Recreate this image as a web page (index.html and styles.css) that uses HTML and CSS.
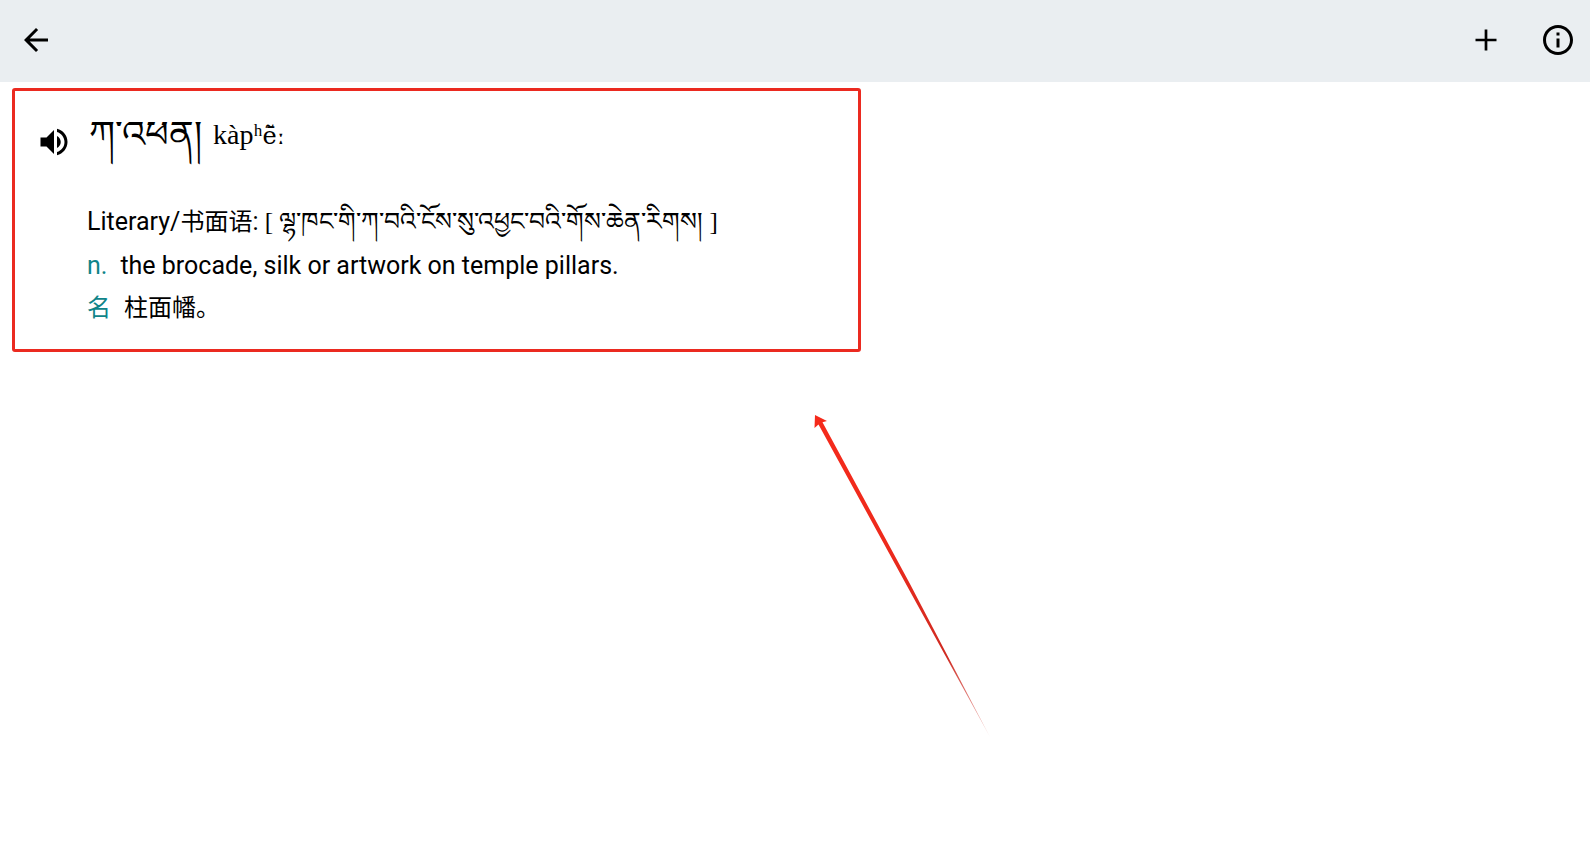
FILE: index.html
```html
<!DOCTYPE html>
<html lang="en">
<head>
<meta charset="utf-8">
<title>Dictionary entry</title>
<link rel="stylesheet" href="styles.css">
</head>
<body>
<header class="appbar">
  <button class="icon-button" type="button" aria-label="Back">
    <svg class="icon" viewBox="0 0 24 24"><path d="M20 11H7.83l5.59-5.59L12 4l-8 8 8 8 1.41-1.41L7.83 13H20v-2z"/></svg>
  </button>
  <div class="actions">
    <button class="icon-button" type="button" aria-label="Add">
      <svg class="icon" viewBox="0 0 24 24"><path d="M19 12.900h-6.100V19h-1.800v-6.100H5v-1.800h6.100V5h1.800v6.100H19z"/></svg>
    </button>
    <button class="icon-button" type="button" aria-label="Information">
      <svg class="icon" viewBox="0 0 24 24"><path d="M11 7h2v2h-2zm0 4h2v6h-2zm1-9C6.480 2 2 6.480 2 12s4.480 10 10 10 10-4.480 10-10S17.520 2 12 2zm0 18c-4.410 0-8-3.590-8-8s3.590-8 8-8 8 3.590 8 8-3.590 8-8 8z"/></svg>
    </button>
  </div>
</header>
<main class="page">
  <article class="entry">
    <button class="icon-button speak" type="button" aria-label="Play pronunciation">
      <svg class="icon" viewBox="0 0 24 24"><path d="M3 9v6h4l5 5V4L7 9H3zm13.500 3c0-1.770-1.020-3.290-2.500-4.030v8.050c1.480-.73 2.500-2.250 2.500-4.020zM14 3.230v2.060c2.890.86 5 3.540 5 6.710s-2.110 5.850-5 6.710v2.060c4.010-.91 7-4.490 7-8.770s-2.990-7.860-7-8.770z"/></svg>
    </button>
    <div class="body">
      <h1 class="headword"><span class="tibetan" lang="bo">ཀ་འཕན།</span><span class="phonetic">kàpʰ<span class="ipa">ẽ̄ː</span></span></h1>
      <p class="sense">Literary/<span class="han" lang="zh">书面语</span>: <span class="serif">[ <span lang="bo">ལྷ་ཁང་གི་ཀ་བའི་ངོས་སུ་འཕྱང་བའི་གོས་ཆེན་རིགས།</span> ]</span></p>
      <p class="sense gloss"><span class="pos">n.</span><span>the brocade, silk or artwork on temple pillars.</span></p>
      <p class="sense gloss han" lang="zh"><span class="pos">名</span><span>柱面幡。</span></p>
    </div>
  </article>
  <div class="callout">
    <svg class="callout-arrow" width="180" height="330" viewBox="-2 -1 180 330">
      <defs>
        <linearGradient id="fade" x1="0" y1="0" x2="0" y2="1">
          <stop offset="0" stop-color="#f52a1b"/>
          <stop offset=".4" stop-color="#ee2a1c"/>
          <stop offset=".75" stop-color="#cf2b22"/>
          <stop offset="1" stop-color="#d04038" stop-opacity=".3"/>
        </linearGradient>
      </defs>
      <path fill="url(#fade)" d="M0 0 L12 6 L7.500 7.200 L94.500 168 L175 322 L91.500 170 L3.500 9.500 L-0.500 13 Z"/>
    </svg>
  </div>
</main>
</body>
</html>
```
FILE: styles.css
```css
* {
  box-sizing: border-box;
}

body {
  display: flex;
  flex-direction: column;
  min-height: 100vh;
  margin: 0;
  background: #fff;
  color: #000;
  font-family: Roboto, "Noto Sans CJK SC", sans-serif;
  font-size: 25px;
}

.appbar {
  display: flex;
  align-items: center;
  justify-content: space-between;
  padding: 4px 0 6px;
  background: #eaeef1;
}

.actions {
  display: flex;
  gap: 4px;
}

.icon-button {
  display: flex;
  align-items: center;
  justify-content: center;
  width: 72px;
  height: 72px;
  padding: 0;
  border: 0;
  background: none;
  color: inherit;
  cursor: pointer;
}

.actions .icon-button:last-child {
  width: 64px;
}

.icon {
  display: block;
  width: 36px;
  height: 36px;
  fill: currentColor;
}

.page {
  flex: 1;
  padding: 6px 12px;
}

.entry {
  display: flex;
  align-items: flex-start;
  max-width: 849px;
  padding: 15px 20px 19px;
  border: 3px solid #eb2a20;
  border-radius: 3px;
}

.speak {
  width: 38px;
}

.body {
  flex: 1;
  padding-left: 14px;
}

.headword {
  display: flex;
  align-items: flex-start;
  gap: 11px;
  height: 94px;
  margin: 0;
  padding: 9px 0 0 2px;
  font-family: "Liberation Serif", serif;
  font-size: 28px;
  font-weight: 400;
  line-height: 40px;
}

.tibetan {
  font-size: 37px;
}

.ipa {
  font-family: "DejaVu Serif", serif;
  font-size: 24px;
}

.sense {
  margin: 0;
  line-height: 43px;
}

.serif {
  font-family: "Liberation Serif", serif;
}

.han {
  font-size: 24px;
}

.gloss {
  display: flex;
  gap: 13px;
}

.pos {
  color: #0f8489;
}

.callout {
  padding: 62px 0 0 801px;
}

.callout-arrow {
  display: block;
}
```
